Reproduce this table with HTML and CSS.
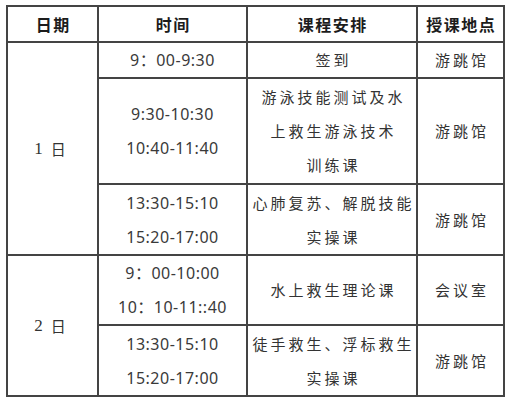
FILE: index.html
```html
<!DOCTYPE html>
<html lang="zh">
<head>
<meta charset="utf-8">
<link rel="stylesheet" href="styles.css">
</head>
<body>
<div class="schedule">
  <div class="cell head">日期</div>
  <div class="cell head">时间</div>
  <div class="cell head">课程安排</div>
  <div class="cell head">授课地点</div>

  <div class="cell day span3"><span class="num">1</span><span class="ri">日</span></div>
  <div class="cell time">9：00-9:30</div>
  <div class="cell course">签到</div>
  <div class="cell place">游跳馆</div>

  <div class="cell time">9:30-10:30<br>10:40-11:40</div>
  <div class="cell course">游泳技能测试及水<br>上救生游泳技术<br>训练课</div>
  <div class="cell place">游跳馆</div>

  <div class="cell time">13:30-15:10<br>15:20-17:00</div>
  <div class="cell course">心肺复苏、解脱技能<br>实操课</div>
  <div class="cell place">游跳馆</div>

  <div class="cell day span2"><span class="num">2</span><span class="ri">日</span></div>
  <div class="cell time">9：00-10:00<br>10：10-11::40</div>
  <div class="cell course">水上救生理论课</div>
  <div class="cell place">会议室</div>

  <div class="cell time">13:30-15:10<br>15:20-17:00</div>
  <div class="cell course">徒手救生、浮标救生<br>实操课</div>
  <div class="cell place">游跳馆</div>
</div>
</body>
</html>
```

FILE: styles.css
```css
html, body {
  margin: 0;
  padding: 0;
  background: #ffffff;
}

body {
  font-family: "Noto Sans CJK SC", "Noto Sans", sans-serif;
  color: #333333;
}

.schedule {
  display: grid;
  width: max-content;
  grid-template-columns: 89px 147px 168px 85px;
  grid-template-rows: 34px 34px 104px 69px 68px 69px;
  gap: 2px;
  padding: 2px;
  margin: 5px 0 0 6px;
  background: #444444;
}

.cell {
  background: #ffffff;
  display: flex;
  align-items: center;
  justify-content: center;
  text-align: center;
  font-size: 15px;
  line-height: 34px;
}

.head {
  font-size: 16px;
  font-weight: 700;
  color: #1c1c1c;
  letter-spacing: 1.5px;
  padding-left: 1.5px;
}

.span3 {
  grid-row: span 3;
}

.span2 {
  grid-row: span 2;
}

.day {
  font-size: 15px;
  padding-right: 5px;
}

.num {
  font-family: "Liberation Serif", serif;
  font-size: 17px;
  margin-right: 8px;
}

.ri {
  font-size: 15px;
}

.time {
  font-family: "Noto Sans", "Noto Sans CJK SC", sans-serif;
  font-size: 16px;
  letter-spacing: 0.5px;
  color: #3a3a3a;
}

.course {
  letter-spacing: 3px;
  padding-left: 3px;
}

.place {
  letter-spacing: 3px;
  padding-left: 3px;
}
```
